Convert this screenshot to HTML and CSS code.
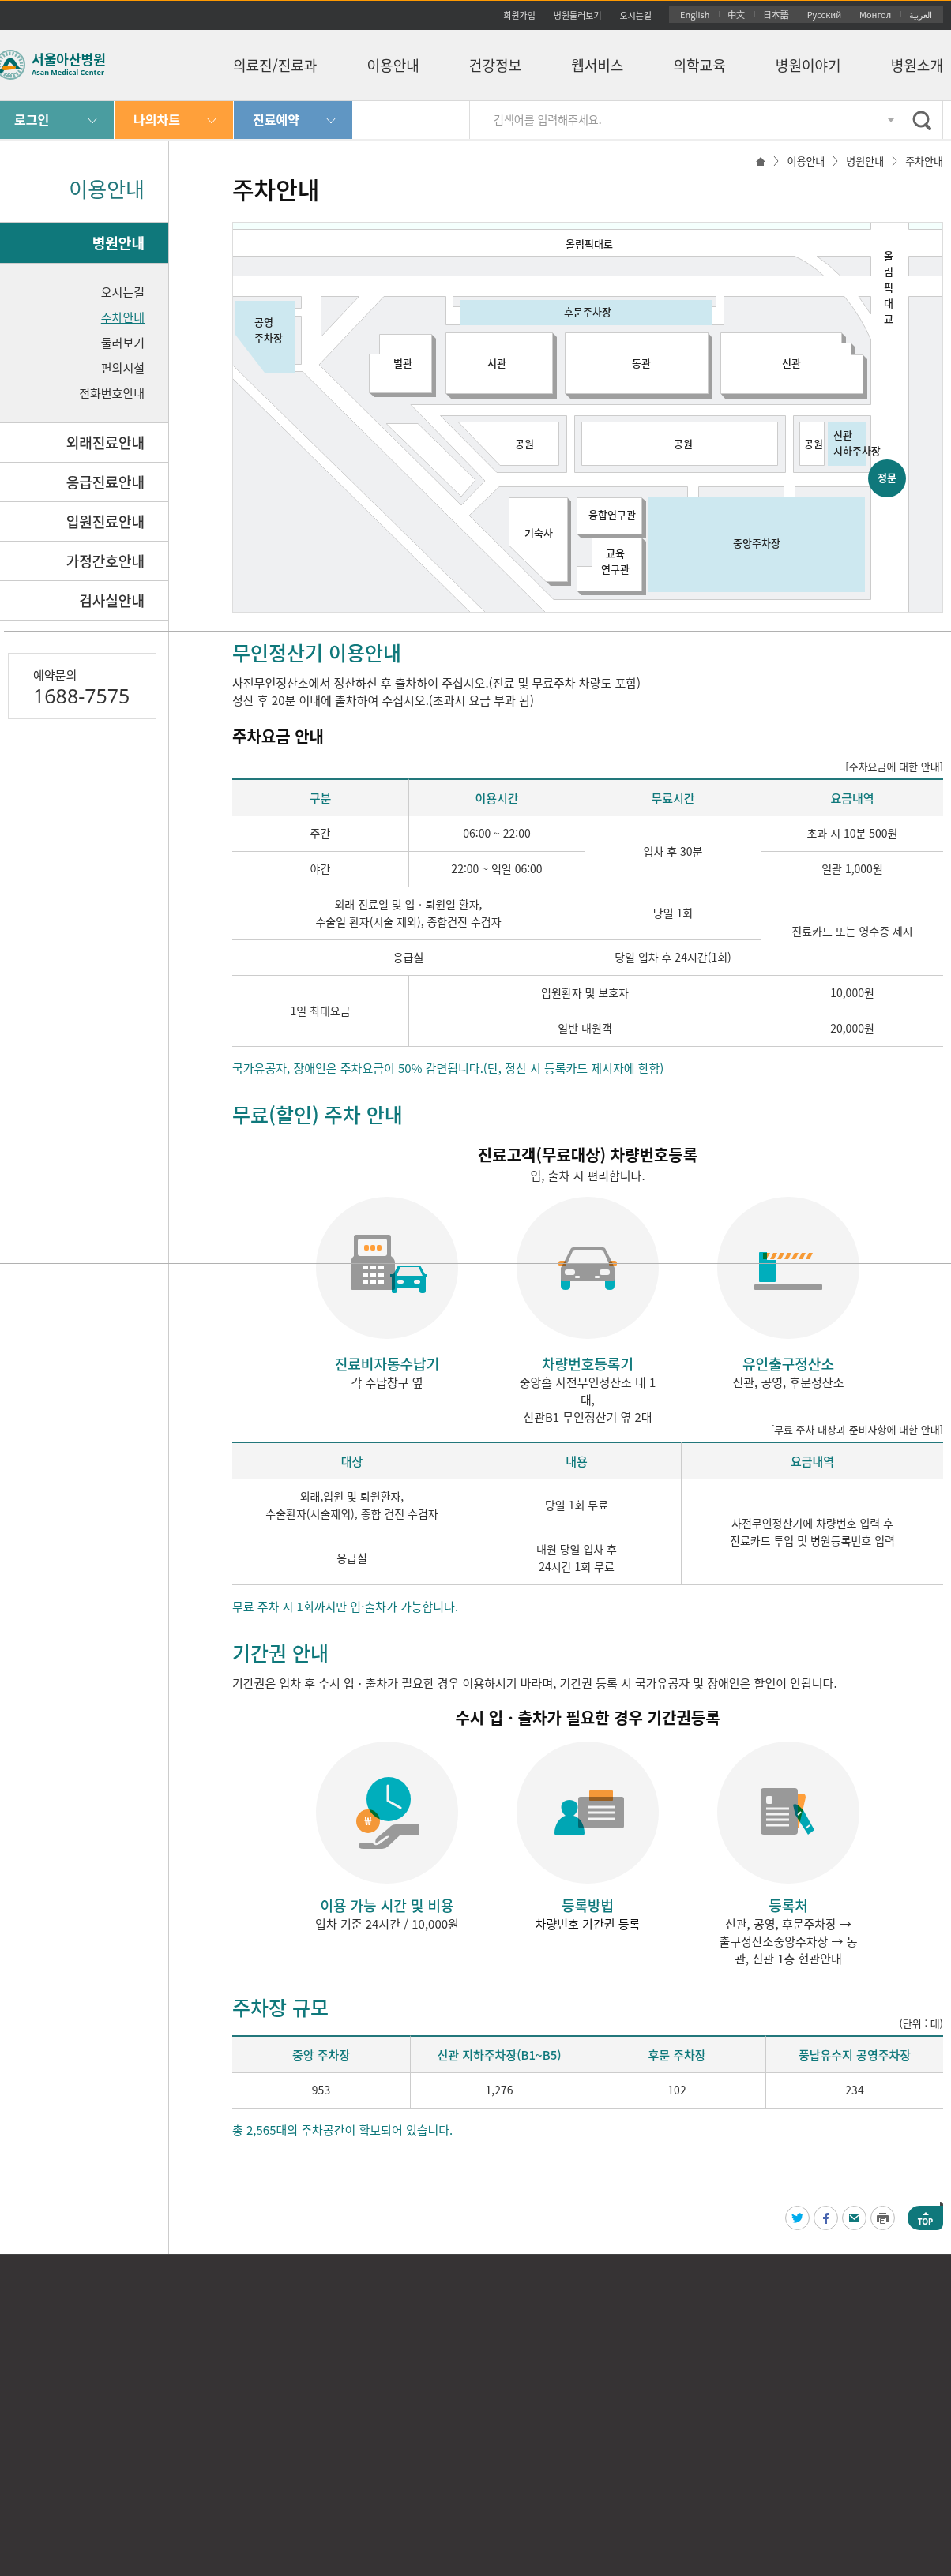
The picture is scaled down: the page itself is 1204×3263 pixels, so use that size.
FILE: index.html
```html
<!DOCTYPE html>
<html lang="ko">
<head>
<meta charset="utf-8">
<meta name="viewport" content="width=device-width, initial-scale=1">
<title>주차안내 | 서울아산병원</title>
<link rel="stylesheet" href="styles.css">
</head>
<body>
<div class="page" id="top">
  <header>
    <div class="topbar">
      <ul class="member-links">
        <li><a href="#">회원가입</a></li>
        <li><a href="#">병원둘러보기</a></li>
        <li><a href="#">오시는길</a></li>
      </ul>
      <ul class="languages">
        <li><a href="#" lang="en">English</a></li>
        <li><a href="#" lang="zh">中文</a></li>
        <li><a href="#" lang="ja">日本語</a></li>
        <li><a href="#" lang="ru">Русский</a></li>
        <li><a href="#" lang="mn">Монгол</a></li>
        <li><a href="#" lang="ar">العربية</a></li>
      </ul>
    </div>
    <div class="masthead">
      <a class="logo" href="#">
        <svg class="logo-mark" viewBox="0 0 33 40" width="33" height="40" aria-hidden="true">
          <circle cx="13" cy="20" r="18" fill="#f0f0f0" stroke="#7fb3b1" stroke-width="2"/>
          <circle cx="13" cy="20" r="14" fill="none" stroke="#7fb3b1" stroke-width="5" stroke-dasharray="2 2"/>
          <circle cx="13" cy="20" r="12" fill="#f0f0f0"/>
          <path d="M-1 27C5 24 5 13 11 12c8-2 8 6 15 13h-6c-3-2-4-7-8-8-3 4-5 11-13 15z" fill="#006b6b"/>
          <path d="M4 22c5-2 8 1 16 0 0 3-2 4-5 4-4 0-8 2-13 0z" fill="#f08c00"/>
          <path d="M6 31h14M8 34h10" stroke="#7fb3b1" stroke-width="2" stroke-dasharray="3 1"/>
        </svg>
        <span class="logo-text">
          <strong>서울아산병원</strong>
          <span>Asan Medical Center</span>
        </span>
      </a>
      <nav class="main-nav" aria-label="주 메뉴">
        <a href="#">의료진/진료과</a>
        <a href="#">이용안내</a>
        <a href="#">건강정보</a>
        <a href="#">웹서비스</a>
        <a href="#">의학교육</a>
        <a href="#">병원이야기</a>
        <a href="#">병원소개</a>
      </nav>
    </div>
    <div class="quickbar">
      <button class="quick quick-login" type="button">로그인
        <svg viewBox="0 0 14 10" width="14" height="10" aria-hidden="true"><path d="M1 1l6 7 6-7"/></svg></button>
      <button class="quick quick-chart" type="button">나의차트
        <svg viewBox="0 0 14 10" width="14" height="10" aria-hidden="true"><path d="M1 1l6 7 6-7"/></svg></button>
      <button class="quick quick-booking" type="button">진료예약
        <svg viewBox="0 0 14 10" width="14" height="10" aria-hidden="true"><path d="M1 1l6 7 6-7"/></svg></button>
      <form class="search" role="search">
        <input type="text" aria-label="검색어" placeholder="검색어를 입력해주세요.">
        <button class="search-more" type="button" aria-label="검색어 목록 열기">
          <svg viewBox="0 0 8 5" width="8" height="5"><path d="M0 0h8L4 5z" fill="#aaa"/></svg>
        </button>
        <button class="search-go" type="submit" aria-label="검색">
          <svg viewBox="0 0 24 25" width="24" height="25" fill="none" stroke="#666"><circle cx="11" cy="11" r="9" stroke-width="3"/><path d="M17 18l5 5" stroke-width="4" stroke-linecap="round"/></svg>
        </button>
      </form>
    </div>
  </header>

  <div class="columns">
    <aside class="sidebar">
      <p class="sidebar-title">이용안내</p>
      <nav aria-label="이용안내 메뉴">
        <a class="section-link current" href="#">병원안내</a>
        <ul class="sub-menu">
          <li><a href="#">오시는길</a></li>
          <li><a class="selected" href="#">주차안내</a></li>
          <li><a href="#">둘러보기</a></li>
          <li><a href="#">편의시설</a></li>
          <li><a href="#">전화번호안내</a></li>
        </ul>
        <a class="section-link" href="#">외래진료안내</a>
        <a class="section-link" href="#">응급진료안내</a>
        <a class="section-link" href="#">입원진료안내</a>
        <a class="section-link" href="#">가정간호안내</a>
        <a class="section-link" href="#">검사실안내</a>
      </nav>
      <div class="contact">
        <span>예약문의</span>
        <strong>1688-7575</strong>
      </div>
    </aside>

    <main>
      <nav class="breadcrumb" aria-label="현재 위치">
        <a href="#" aria-label="홈"><svg viewBox="0 0 12 11" width="12" height="11"><path d="M6 0l6 6h-2v5H2V6H0z" fill="#666"/></svg></a>
        <svg class="sep" viewBox="0 0 7 12" width="7" height="12" aria-hidden="true"><path d="M1 0l5 6-5 6"/></svg>
        <a href="#">이용안내</a>
        <svg class="sep" viewBox="0 0 7 12" width="7" height="12" aria-hidden="true"><path d="M1 0l5 6-5 6"/></svg>
        <a href="#">병원안내</a>
        <svg class="sep" viewBox="0 0 7 12" width="7" height="12" aria-hidden="true"><path d="M1 0l5 6-5 6"/></svg>
        <a href="#">주차안내</a>
      </nav>
      <h1>주차안내</h1>

      <svg class="map" viewBox="0 0 900 495" role="img" aria-label="주차장 위치 안내도">
        <rect width="900" height="495" fill="#fff"/>
        <g fill="#f4fffd" stroke="#ccc">
          <path d="M-1-1H808.500V9.500H-1z"/>
          <path d="M856.500-1H901V9.500H856.500z"/>
        </g>
        <g fill="#eff0f2" stroke="#ccc">
          <path d="M-1 43.500H712q20 9 37 25H-1z"/>
          <path d="M740 43.500h68.500v25H770q-14-14-30-25z"/>
          <path d="M856.500 43.500H901v25H856.500z"/>
          <path d="M856.500 94.500H901V496H856.500z"/>
          <path d="M-1 94.500H87.500V109.500H79V119.500H87.500V180.500H79V189.500H89L398 496H322L-1 180z"/>
          <path d="M-1 197L303 496H-1z"/>
          <path d="M112.500 94.500H160.500L112.500 145.500z"/>
          <path d="M192 94.500H270.500V130.500H622.500V94.500H775Q796 120 808.500 149V231.500H226L320 328 290 359 110 181z"/>
          <path d="M279.500 94.500H612.500V107.500H279.500z"/>
          <path d="M793 94.500H808.500V117z"/>
          <path d="M263.500 245.500H423.500V317.500H335z"/>
          <path d="M433.500 245.500H700.500V317.500H433.500z"/>
          <path d="M710.500 245.500H808.500V317.500H710.500z"/>
          <path d="M338 335.500H576.500V349.500H590.500V335.500H698.500V349.500H712.500V335.500H808.500V478.500H407L300 372z"/>
        </g>
        <g fill="#fff" stroke="#ccc">
          <path d="M195 255.500H235L308 327 290 348z"/>
          <path d="M286 253.500H413.500V308.500H339z"/>
          <path d="M442.500 253.500H690.500V308.500H442.500z"/>
          <path d="M718.500 253.500H749.500V308.500H718.500z"/>
        </g>
        <path d="M271 108H288V130H271zM608 108H622V130H608z" fill="#fff"/>
        <g fill="#cde8f0">
          <path d="M4 100H79V191H41L4 143z"/>
          <path d="M288 99H607V131H288z"/>
          <path d="M754 253H803V309H754z"/>
          <path d="M527 349H801V469H527z"/>
        </g>
        <g fill="#9f9f9f">
          <path d="M252 142l6 6v74h-78l-7-6z"/>
          <path d="M405 140l6 6v78H277l-7-7z"/>
          <path d="M602 140l5 6v78H428l-7-7z"/>
          <path d="M771 140l6 6v7h6l6 6v9h9l6 6v50H624l-6-7z"/>
          <path d="M424 349l5 5v107h-26l-6-6z"/>
          <path d="M518 349l6 5v47h-82l-6-6z"/>
          <path d="M518 400l6 5v68h-82l-6-6z"/>
        </g>
        <g fill="#fff" stroke="#ccc">
          <path d="M186.500 142.500H252.500V216.500H173.500V167.500H186.500z"/>
          <path d="M270.500 140.500H405.500V217.500H270.500z"/>
          <path d="M421.500 140.500H602.500V217.500H421.500z"/>
          <path d="M618.500 140.500H771.500V153.500H783.500V168.500H798.500V217.500H618.500z"/>
          <path d="M350.500 349.500H424.500V455.500H397L350.500 410z"/>
          <path d="M436.500 349.500H518.500V395.500H436.500z"/>
          <path d="M455.500 400.500H518.500V467.500H436.500V436.500H455.500z"/>
        </g>
        <circle cx="829" cy="325" r="24" fill="#0f787b"/>
        <g class="map-labels">
          <text x="452" y="33">올림픽대로</text>
          <text x="450" y="119">후문주차장</text>
          <text x="216" y="184">별관</text>
          <text x="335" y="184">서관</text>
          <text x="518" y="184">동관</text>
          <text x="708" y="184">신관</text>
          <text x="370" y="286">공원</text>
          <text x="571" y="286">공원</text>
          <text x="736" y="286">공원</text>
          <text x="388" y="399">기숙사</text>
          <text x="481" y="376">융합연구관</text>
          <text x="485" y="425">교육</text>
          <text x="485" y="445">연구관</text>
          <text x="664" y="412">중앙주차장</text>
          <text class="on-dark" x="829" y="329">정문</text>
          <text x="831" y="48">올</text>
          <text x="831" y="68">림</text>
          <text x="831" y="88">픽</text>
          <text x="831" y="108">대</text>
          <text x="831" y="128">교</text>
          <text class="start" x="28" y="132">공영</text>
          <text class="start" x="28" y="152">주차장</text>
          <text class="start" x="761" y="275">신관</text>
          <text class="start" x="761" y="295">지하주차장</text>
        </g>
        <rect x=".5" y=".5" width="899" height="494" fill="none" stroke="#ddd"/>
      </svg>

      <section>
        <h2>무인정산기 이용안내</h2>
        <p>사전무인정산소에서 정산하신 후 출차하여 주십시오.(진료 및 무료주차 차량도 포함)<br>정산 후 20분 이내에 출차하여 주십시오.(초과시 요금 부과 됨)</p>
        <h3>주차요금 안내</h3>
        <table class="fees">
          <caption>[주차요금에 대한 안내]</caption>
          <colgroup><col><col><col><col class="last"></colgroup>
          <thead>
            <tr><th scope="col">구분</th><th scope="col">이용시간</th><th scope="col">무료시간</th><th scope="col">요금내역</th></tr>
          </thead>
          <tbody>
            <tr><td>주간</td><td>06:00 ~ 22:00</td><td rowspan="2">입차 후 30분</td><td>초과 시 10분 500원</td></tr>
            <tr><td>야간</td><td>22:00 ~ 익일 06:00</td><td>일괄 1,000원</td></tr>
            <tr><td colspan="2">외래 진료일 및 입ㆍ퇴원일 환자,<br>수술일 환자(시술 제외), 종합건진 수검자</td><td>당일 1회</td><td rowspan="2">진료카드 또는 영수증 제시</td></tr>
            <tr><td colspan="2">응급실</td><td>당일 입차 후 24시간(1회)</td></tr>
            <tr><td rowspan="2">1일 최대요금</td><td colspan="2">입원환자 및 보호자</td><td>10,000원</td></tr>
            <tr><td class="inner" colspan="2">일반 내원객</td><td>20,000원</td></tr>
          </tbody>
        </table>
        <p class="note">국가유공자, 장애인은 주차요금이 50% 감면됩니다.(단, 정산 시 등록카드 제시자에 한함)</p>
      </section>

      <section>
        <h2>무료(할인) 주차 안내</h2>
        <h3 class="centered">진료고객(무료대상) 차량번호등록</h3>
        <p class="lead">입, 출차 시 편리합니다.</p>
        <ul class="steps">
          <li>
            <svg viewBox="0 0 180 180" width="180" height="180" aria-hidden="true">
              <circle cx="90" cy="90" r="90" fill="#f4f4f4"/>
              <path d="M51 48h41q3 0 3 3v24q5 4 5 8v33q0 2-2 2H46q-2 0-2-2V83q0-4 4-8V51q0-3 3-3z" fill="#999"/>
              <rect x="53" y="53" width="37" height="22" rx="3" fill="#f6f6f6"/>
              <g fill="#ff9f3a"><rect x="61" y="61" width="6" height="7" rx="2"/><rect x="69" y="61" width="6" height="7" rx="2"/><rect x="77" y="61" width="6" height="7" rx="2"/></g>
              <path d="M59 87h7v5h-7zM69 87h7v5h-7zM79 87h7v5h-7zM59 96h7v5h-7zM69 96h7v5h-7zM79 96h7v5h-7zM59 105h7v5h-7zM69 105h7v5h-7zM79 105h7v5h-7z" fill="#fff"/>
              <g class="overlap"><path d="M104 87h28l6 11h3v4h-2v17q0 3-3 3h-2q-3 0-3-3v-4h-28v4q0 3-3 3h-2q-2 0-2-3v-17h-2v-4h4z" fill="#00aebc"/></g>
              <path d="M107 89h23l5 11h-33z" fill="#ececec"/>
              <rect x="103" y="105" width="8" height="5" rx="2" fill="#f4f4f4"/><rect x="124" y="105" width="8" height="5" rx="2" fill="#f4f4f4"/>
            </svg>
            <h4>진료비자동수납기</h4>
            <p>각 수납창구 옆</p>
          </li>
          <li>
            <svg viewBox="0 0 180 180" width="180" height="180" aria-hidden="true">
              <circle cx="90" cy="90" r="90" fill="#f4f4f4"/>
              <path d="M56 104h12v9q0 5-6 5t-6-5zM112 104h12v9q0 5-6 5t-6-5z" fill="#00aebc"/>
              <path d="M72 64h37q3 0 4 3l8 16 3 7v14q0 3-3 3H59q-3 0-3-3V90l4-7 8-16q1-3 4-3z" fill="#999"/>
              <path d="M74 67h33q2 0 3 2l7 16H64l7-16q1-2 3-2z" fill="#f4f4f4"/>
              <rect class="overlap" x="53" y="81" width="10" height="7" rx="3" fill="#ff9f3a"/><rect class="overlap" x="117" y="81" width="10" height="7" rx="3" fill="#ff9f3a"/>
              <g fill="#f4f4f4"><rect x="61" y="92" width="13" height="7" rx="3"/><rect x="105" y="92" width="13" height="7" rx="3"/><rect x="74" y="100" width="6" height="3" rx="1"/><rect x="99" y="100" width="6" height="3" rx="1"/></g>
            </svg>
            <h4>차량번호등록기</h4>
            <p>중앙홀 사전무인정산소 내 1대,<br>신관B1 무인정산기 옆 2대</p>
          </li>
          <li>
            <svg viewBox="0 0 180 180" width="180" height="180" aria-hidden="true">
              <circle cx="90" cy="90" r="90" fill="#f4f4f4"/>
              <path d="M54 70h9v10h11v27q0 1-1 1H54q-1 0-1-1V71q0-1 1-1z" fill="#00aebc"/>
              <path d="M58 71h5v8h-5z" fill="#007636"/>
              <path d="M63 71h4l-4 7zM71 71h5l-4 8h-5zM80 71h5l-4 8h-5zM89 71h5l-4 8h-5zM98 71h5l-4 8h-5zM107 71h5l-4 8h-5zM116 71h5l-4 8h-5z" fill="#f79a35"/>
              <rect x="47" y="111" width="86" height="7" rx="1" fill="#999"/>
            </svg>
            <h4>유인출구정산소</h4>
            <p>신관, 공영, 후문정산소</p>
          </li>
        </ul>
        <table class="discounts">
          <caption>[무료 주차 대상과 준비사항에 대한 안내]</caption>
          <colgroup><col class="who"><col class="what"><col></colgroup>
          <thead>
            <tr><th scope="col">대상</th><th scope="col">내용</th><th scope="col">요금내역</th></tr>
          </thead>
          <tbody>
            <tr><td>외래,입원 및 퇴원환자,<br>수술환자(시술제외), 종합 건진 수검자</td><td>당일 1회 무료</td><td rowspan="2">사전무인정산기에 차량번호 입력 후<br>진료카드 투입 및 병원등록번호 입력</td></tr>
            <tr><td>응급실</td><td>내원 당일 입차 후<br>24시간 1회 무료</td></tr>
          </tbody>
        </table>
        <p class="note">무료 주차 시 1회까지만 입·출차가 가능합니다.</p>
      </section>

      <section>
        <h2>기간권 안내</h2>
        <p>기간권은 입차 후 수시 입ㆍ출차가 필요한 경우 이용하시기 바라며, 기간권 등록 시 국가유공자 및 장애인은 할인이 안됩니다.</p>
        <h3 class="centered">수시 입ㆍ출차가 필요한 경우 기간권등록</h3>
        <ul class="steps compact">
          <li>
            <svg viewBox="0 0 180 180" width="180" height="180" aria-hidden="true">
              <circle cx="90" cy="90" r="90" fill="#f4f4f4"/>
              <circle cx="92" cy="73" r="28" fill="#00aebc"/>
              <path d="M91 56v19l16 9" fill="none" stroke="#f4f4f4" stroke-width="3" stroke-linecap="round" stroke-linejoin="round"/>
              <circle class="overlap" cx="66" cy="101" r="15" fill="#ff9f3a"/>
              <text class="coin" x="66" y="106">₩</text>
              <path d="M130 105H101q-5 0-8 4L77 122q-3 4-1 7l13-9q3-1 2 2l-9 6q-4 4-7 2-3 0-3-2H60q-6 0-6 4t6 4h24q4 0 7-3l15-14h24z" fill="#999"/>
              <path d="M73 128q2 4 7 1l12-9" fill="none" stroke="#f4f4f4" stroke-width="2"/>
            </svg>
            <h4>이용 가능 시간 및 비용</h4>
            <p class="one-line">입차 기준 24시간 / 10,000원</p>
          </li>
          <li>
            <svg viewBox="0 0 180 180" width="180" height="180" aria-hidden="true">
              <circle cx="90" cy="90" r="90" fill="#f4f4f4"/>
              <rect x="78" y="70" width="58" height="40" rx="3" fill="#999"/>
              <path d="M91 83h34M91 90h34M91 98h34" stroke="#f4f4f4" stroke-width="3"/>
              <rect class="overlap" x="92" y="62" width="30" height="13" rx="1" fill="#ff9f3a"/>
              <path class="overlap" d="M67 74c13 0 13 14 5 20 9 2 14 12 14 22 0 2-1 3-3 3H51c-2 0-3-1-3-3 0-10 6-20 14-22-8-6-8-20 5-20z" fill="#00aebc"/>
            </svg>
            <h4>등록방법</h4>
            <p class="strong-text">차량번호 기간권 등록</p>
          </li>
          <li>
            <svg viewBox="0 0 180 180" width="180" height="180" aria-hidden="true">
              <circle cx="90" cy="90" r="90" fill="#f4f4f4"/>
              <path d="M102 66h6q4 0 4 5l-9 38h-1z" fill="#ff9f3a"/>
              <rect x="55" y="59" width="47" height="59" rx="4" fill="#999"/>
              <rect x="62" y="69" width="8" height="10" rx="2" fill="#f4f4f4"/>
              <path d="M62 85h29M62 92h29M62 99h29M62 106h29" stroke="#f4f4f4" stroke-width="3"/>
              <path class="overlap" d="M96 80q4-2 8 2l5 5 14 25-8 6-16-25z" fill="#00aebc"/>
              <path d="M102 93l4-4M112 110l5-4" stroke="#f4f4f4" stroke-width="2"/>
            </svg>
            <h4>등록처</h4>
            <p>신관, 공영, 후문주차장 →<br>출구정산소중앙주차장 → 동관, 신관 1층 현관안내</p>
          </li>
        </ul>
      </section>

      <section>
        <h2 class="spaced">주차장 규모</h2>
        <table class="capacity">
          <caption>(단위 : 대)</caption>
          <thead>
            <tr><th scope="col">중앙 주차장</th><th scope="col">신관 지하주차장(B1~B5)</th><th scope="col">후문 주차장</th><th scope="col">풍납유수지 공영주차장</th></tr>
          </thead>
          <tbody>
            <tr><td>953</td><td>1,276</td><td>102</td><td>234</td></tr>
          </tbody>
        </table>
        <p class="note">총 2,565대의 주차공간이 확보되어 있습니다.</p>
      </section>

      <div class="share">
        <a class="round" href="#" aria-label="트위터"><svg viewBox="0 0 24 24" width="15" height="15"><path fill="#00aced" d="M24 4.600a10 10 0 0 1-2.800.800 5 5 0 0 0 2.100-2.700 10 10 0 0 1-3.100 1.200 4.900 4.900 0 0 0-8.400 4.500A14 14 0 0 1 1.700 3.200a4.900 4.900 0 0 0 1.500 6.500 5 5 0 0 1-2.200-.6 4.900 4.900 0 0 0 3.900 4.900 5 5 0 0 1-2.200.1 4.900 4.900 0 0 0 4.600 3.400A10 10 0 0 1 0 19.500 14 14 0 0 0 21.500 7z"/></svg></a>
        <a class="round" href="#" aria-label="페이스북"><svg viewBox="0 0 8 14" width="8" height="14"><path fill="#4a66b0" d="M2 14V8H0V5h2V4q0-4 4-4h1v3H6q-1 0-1 1v1h2L6.500 8H5v6z"/></svg></a>
        <a class="round" href="#" aria-label="이메일"><svg viewBox="0 0 13 10" width="13" height="10"><path fill="#0f787b" d="M0 0h13v10H0z"/><path d="M1 1l5.500 5L12 1" fill="none" stroke="#fff" stroke-width="1.500"/></svg></a>
        <button class="round" type="button" aria-label="인쇄"><svg viewBox="0 0 15 14" width="15" height="14"><path fill="#666" d="M3 0h9v2H3zM1 3h13q1 0 1 1v7h-3V6H3v5H0V4q0-1 1-1z"/><path d="M4.500 7.500h6v6h-6zM6 9.500h3M6 11.500h3" fill="none" stroke="#666"/></svg></button>
        <a class="to-top" href="#top"><svg viewBox="0 0 8 4" width="8" height="4" aria-hidden="true"><path d="M0 4l4-4 4 4z" fill="#fff"/></svg>TOP</a>
      </div>
    </main>
  </div>
  <div class="fold-line first"></div>
  <div class="fold-line second"></div>
</div>
<footer></footer>
</body>
</html>
```

FILE: styles.css
```css
* { box-sizing: border-box; }

body, h1, h2, h3, h4, p, ul { margin: 0; padding: 0; }

body {
  background: #363334;
  color: #333;
  font-family: "Noto Sans CJK KR", "Noto Sans", sans-serif;
  font-size: 15px;
  line-height: 22px;
}

ul { list-style: none; }
a { color: inherit; text-decoration: none; }
button, input { font-family: inherit; border: 0; background: none; padding: 0; }
svg { display: block; flex: none; }

.page { position: relative; background: #fff; overflow: hidden; }

/* Header */
.topbar {
  display: flex;
  justify-content: flex-end;
  align-items: flex-start;
  gap: 22px;
  height: 38px;
  padding: 6px 10px 0 0;
  border-top: 1px solid #f90;
  background: #333435;
  color: #ddd;
  font-size: 11px;
}
.member-links { display: flex; gap: 23px; line-height: 24px; }
.languages {
  display: flex;
  justify-content: space-between;
  width: 347px;
  padding: 0 14px;
  background: #4a4a4a;
  line-height: 22px;
}
.languages li { display: flex; align-items: center; gap: 10px; }
.languages li + li::before { content: ""; width: 1px; height: 8px; background: #666; }

.masthead {
  display: flex;
  align-items: center;
  height: 90px;
  padding: 0 10px 2px 0;
  border-bottom: 1px solid #d9d9d9;
  background: #f0f0f0;
}
.logo { display: flex; align-items: center; gap: 7px; width: 295px; color: #006b6b; }
.logo-text { display: flex; flex-direction: column; }
.logo-text strong { font-size: 17px; line-height: 20px; }
.logo-text span { font: bold 9px/14px "Noto Sans", sans-serif; }
.main-nav { display: flex; flex: 1; justify-content: space-between; font-size: 18px; }

.quickbar { display: flex; gap: 1px; height: 50px; padding-right: 10px; border-bottom: 2px solid #eee; }
.quick {
  display: flex;
  justify-content: space-between;
  align-items: center;
  width: 150px;
  padding: 0 20px 2px 24px;
  color: #fff;
  font-size: 16px;
  font-weight: bold;
}
.quick svg { margin-top: 4px; }
.quick path { fill: none; stroke: #fff; stroke-width: 1; }
.quick-login { width: 144px; padding-left: 18px; background: #4a9da0; }
.quick-chart { background: #ffa03a; }
.quick-booking { background: #6096c3; }
.search {
  display: flex;
  align-items: center;
  width: 600px;
  margin-left: auto;
  border: solid #ddd;
  border-width: 0 1px;
}
.search input { flex: 1; height: 48px; padding: 0 0 2px 30px; font-size: 14px; }
.search input::placeholder { color: #999; }
.search-more { padding: 10px; }
.search-go { padding: 0 14px 0 13px; }

/* Page columns */
.columns { display: flex; }

.sidebar { flex: none; width: 214px; padding-top: 33px; border-right: 1px solid #ccc; text-align: right; }
.sidebar-title { margin-right: 30px; padding-bottom: 27px; color: #22777b; font-size: 26px; line-height: 30px; }
.sidebar-title::before { content: ""; display: block; width: 29px; height: 1px; margin: 0 0 12px auto; background: #0f787b; }
.section-link {
  display: block;
  padding-right: 30px;
  border-bottom: 1px solid #ccc;
  font-size: 18px;
  font-weight: 500;
  line-height: 49px;
}
.section-link.current { border-top: 1px solid #ccc; background: #0f787b; color: #fff; font-weight: bold; line-height: 51px; }
.sub-menu { padding: 20px 30px 21px 0; border-bottom: 1px solid #ccc; background: #f0f0f0; line-height: 32px; }
.sub-menu .selected { color: #0f787b; text-decoration: underline; }
.contact {
  display: flex;
  flex-direction: column;
  height: 84px;
  margin: 41px 15px 0 10px;
  padding: 16px 0 0 31px;
  border: 1px solid #ddd;
  text-align: left;
}
.contact strong { font: 500 25px/30px "Open Sans", "Noto Sans", sans-serif; }

main { flex: 1; min-width: 0; padding: 16px 10px 30px 80px; }
.breadcrumb { display: flex; justify-content: flex-end; align-items: center; gap: 10px; font-size: 13px; line-height: 20px; }
.sep path { fill: none; stroke: #666; }

h1 { margin: 5px 0 22px; color: #111; font-size: 30px; font-weight: 500; line-height: 40px; }
h2 { margin: 29px 0 10px; color: #0f787b; font-size: 25px; font-weight: 500; line-height: 36px; }
h3 { margin: 20px 0 13px; color: #111; font-size: 20px; font-weight: bold; line-height: 30px; }
h3.centered { margin: 18px 0 0; text-align: center; }
h2 + h3.centered { margin-top: 19px; }
.map + section h2, h2.spaced { margin-top: 32px; }
.lead { text-align: center; }
.note { margin-top: 16px; color: #0f787b; }

/* Parking map */
.map { width: 100%; height: auto; }
.map-labels { fill: #222; font-size: 13px; font-weight: 500; text-anchor: middle; }
.map-labels .start { text-anchor: start; }
.map-labels .on-dark { fill: #fff; font-weight: bold; }

/* Tables */
table { width: 100%; border-collapse: separate; border-spacing: 0; table-layout: fixed; }
caption { padding-bottom: 5px; font-size: 13px; line-height: 20px; text-align: right; }
th {
  height: 48px;
  padding: 0;
  border-top: 2px solid #22777b;
  border-bottom: 1px solid #ccc;
  background: #f4f4f4;
  color: #0f787b;
  font-weight: 500;
}
td { height: 45px; padding: 10px 0 12px; border-bottom: 1px solid #ccc; font-size: 14px; text-align: center; }
th + th, td + td, td.inner { border-left: 1px solid #ccc; }
.fees .last { width: 231px; }
.discounts { margin-top: -5px; }
.discounts .who { width: 303px; }
.discounts .what { width: 265px; }
.capacity { margin-top: -17px; }

/* Illustrated steps */
.steps { display: flex; justify-content: space-between; margin-top: 16px; padding: 0 106px; text-align: center; }
.steps li { width: 180px; }
.steps h4 { margin-top: 18px; color: #0f787b; font-size: 18px; font-weight: 500; line-height: 26px; }
.steps .one-line { margin: 0 -10px; white-space: nowrap; }
.steps .strong-text { color: #111; }
.steps.compact { margin-top: 15px; }
.steps.compact h4 { margin-top: 14px; }
.overlap { mix-blend-mode: multiply; }
.coin { fill: #fff; font-size: 14px; font-weight: bold; text-anchor: middle; }

/* Sharing and back to top */
.share { display: flex; justify-content: flex-end; gap: 5px; margin-top: 85px; }
.round {
  display: flex;
  justify-content: center;
  align-items: center;
  width: 31px;
  height: 31px;
  border: 1px solid #bbb;
  border-radius: 50%;
}
.to-top {
  position: relative;
  display: flex;
  flex-direction: column;
  align-items: center;
  gap: 2px;
  width: 45px;
  height: 31px;
  margin-left: 11px;
  padding-top: 8px;
  border-radius: 15px 0 8px 15px;
  background: #0f787b;
  color: #fff;
  font: bold 10px/12px "Noto Sans", sans-serif;
}
.to-top::before {
  content: "";
  position: absolute;
  top: -5px;
  right: 0;
  width: 4px;
  height: 5px;
  border-radius: 0 4px 0 0;
  background: #444;
}

/* Rules drawn across the whole page */
.fold-line { position: absolute; right: 0; left: 0; height: 1px; background: #b1b1b1; }
.fold-line.first { top: 799px; left: 5px; }
.fold-line.second { top: 1600px; }

footer { min-height: 408px; border-top: 1px solid #444; background: #363334; }
```
